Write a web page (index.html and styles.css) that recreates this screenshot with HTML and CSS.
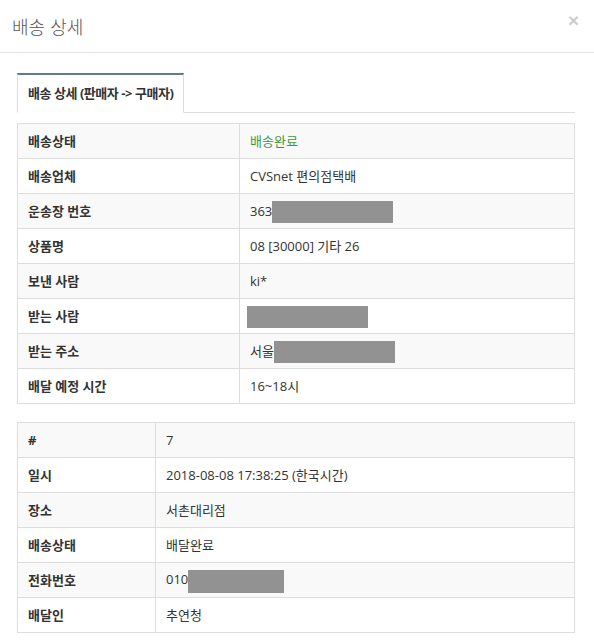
FILE: index.html
```html
<!DOCTYPE html>
<html lang="ko">
<head>
<meta charset="utf-8">
<link rel="stylesheet" href="styles.css">
</head>
<body>
<div class="modal">
  <div class="modal-header">
    <h4 class="modal-title">배송 상세</h4>
    <span class="close">×</span>
  </div>
  <div class="modal-body">
    <ul class="tabs">
      <li class="tab active">배송 상세 (판매자 -&gt; 구매자)</li>
    </ul>
    <table class="info info-main">
      <colgroup><col class="col-label-wide"><col></colgroup>
      <tr><th>배송상태</th><td class="ok">배송완료</td></tr>
      <tr><th>배송업체</th><td>CVSnet 편의점택배</td></tr>
      <tr><th>운송장 번호</th><td>363<span class="mask mask-a"></span></td></tr>
      <tr><th>상품명</th><td>08 [30000] 기타 26</td></tr>
      <tr><th>보낸 사람</th><td>ki*</td></tr>
      <tr><th>받는 사람</th><td><span class="mask mask-b"></span></td></tr>
      <tr><th>받는 주소</th><td>서울<span class="mask mask-a"></span></td></tr>
      <tr><th>배달 예정 시간</th><td>16~18시</td></tr>
    </table>
    <table class="info info-track">
      <colgroup><col class="col-label-narrow"><col></colgroup>
      <tr><th>#</th><td>7</td></tr>
      <tr><th>일시</th><td>2018-08-08 17:38:25 (한국시간)</td></tr>
      <tr><th>장소</th><td>서촌대리점</td></tr>
      <tr><th>배송상태</th><td>배달완료</td></tr>
      <tr><th>전화번호</th><td>010<span class="mask mask-c"></span></td></tr>
      <tr><th>배달인</th><td>추연청</td></tr>
    </table>
  </div>
</div>
</body>
</html>
```

FILE: styles.css
```css
* { box-sizing: border-box; }
html, body { margin: 0; padding: 0; background: #fff; }
body {
  font-family: "Open Sans", "Noto Sans CJK KR", sans-serif;
  font-size: 13px;
  color: #333;
}
.modal { width: 594px; }
.modal-header {
  display: flex;
  justify-content: space-between;
  align-items: flex-start;
  padding: 15px 15px 15px 12px;
  border-bottom: 1px solid #e5e5e5;
}
.modal-title {
  margin: 0;
  font-size: 18px;
  line-height: 22px;
  font-weight: 300;
  color: #555;
  font-family: "Noto Sans CJK KR", sans-serif;
}
.close {
  font-size: 19px;
  line-height: 10px;
  font-weight: bold;
  color: #000;
  opacity: 0.2;
  font-family: "Liberation Sans", sans-serif;
  margin-top: 1px;
}
.modal-body { padding: 20px 19px 0 17px; }
.tabs {
  list-style: none;
  margin: 0;
  padding: 0;
  display: flex;
  border-bottom: 1px solid #ddd;
}
.tab {
  margin-bottom: -1px;
  padding: 9px 10px 10px 10px;
  line-height: 18px;
  font-weight: bold;
  letter-spacing: -0.45px;
  white-space: nowrap;
  background: #fff;
  border: 1px solid #ddd;
  border-top: 2px solid #5d7c86;
  border-bottom-color: transparent;
}
.info {
  width: 100%;
  border-collapse: collapse;
  border: 1px solid #ddd;
}
.info-main { margin-top: 10px; }
.info-track { margin-top: 18px; }
.col-label-wide { width: 222px; }
.col-label-narrow { width: 138px; }
.info tr { height: 35px; }
.info th, .info td {
  border: 1px solid #ddd;
  padding: 0 10px;
  line-height: 16px;
  text-align: left;
  vertical-align: middle;
}
.info th { font-weight: bold; }
.info td { font-weight: normal; }
.info tr:nth-child(odd) { background: #f9f9f9; }
.ok { color: #3e9a3e; }
.mask {
  display: inline-block;
  background: #929292;
  height: 22px;
  margin: -4px 0;
  vertical-align: middle;
}
.mask-a { width: 121px; }
.mask-b { width: 121px; margin-left: -3px; }
.mask-c { width: 96px; height: 23px; }
```
